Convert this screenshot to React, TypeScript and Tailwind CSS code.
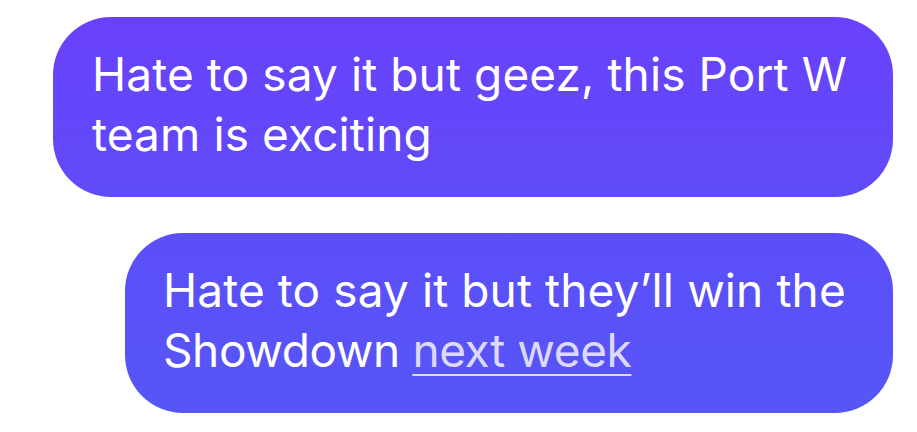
export default function App() {
  return (
    <div className="min-h-screen w-full bg-white font-['Inter','Noto_Sans',sans-serif]">
      <div className="flex flex-col items-end gap-[36px] pt-[17px] pr-[24px]">
        {/* incoming thought */}
        <div className="w-[840px] h-[180px] rounded-[58px] bg-gradient-to-b from-[#6941fa] to-[#5f4bf9] pl-[39px] pt-[27px]">
          <p className="text-white text-[46px] leading-[60px] tracking-[0.1px] whitespace-nowrap">
            Hate to say it but geez, this Port W
            <br />
            team is exciting
          </p>
        </div>

        {/* reply with a date link */}
        <div className="w-[768px] h-[180px] rounded-[58px] bg-gradient-to-b from-[#5c4ef9] to-[#5656f6] pl-[38px] pt-[27px]">
          <p className="text-white text-[46px] leading-[60px] tracking-[0.1px] whitespace-nowrap">
            Hate to say it but they’ll win the
            <br />
            <span className="tracking-[-0.4px]">
              Showdown{" "}
              <span className="text-[#dcd9fc] underline decoration-2 underline-offset-[7px]">
                next week
              </span>
            </span>
          </p>
        </div>
      </div>
    </div>
  );
}
